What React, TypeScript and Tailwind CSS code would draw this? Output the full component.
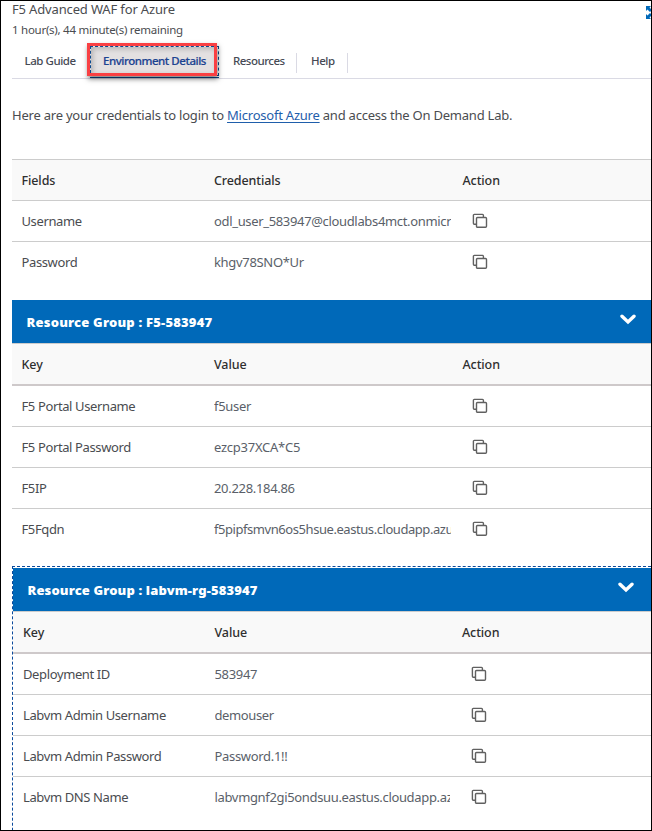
import React from "react";

type Row = { label: string; value: string; valueClass?: string };

const credentials: Row[] = [
  { label: "Username", value: "odl_user_583947@cloudlabs4mct.onmicrosoft.com", valueClass: "tracking-[-0.34px]" },
  { label: "Password", value: "khgv78SNO*Ur" },
];

const f5: Row[] = [
  { label: "F5 Portal Username", value: "f5user" },
  { label: "F5 Portal Password", value: "ezcp37XCA*C5", valueClass: "tracking-[-0.25px]" },
  { label: "F5IP", value: "20.228.184.86" },
  { label: "F5Fqdn", value: "f5pipfsmvn6os5hsue.eastus.cloudapp.azure.com", valueClass: "tracking-[-0.44px]" },
];

const labvm: Row[] = [
  { label: "Deployment ID", value: "583947" },
  { label: "Labvm Admin Username", value: "demouser", valueClass: "tracking-[-0.4px]" },
  { label: "Labvm Admin Password", value: "Password.1!!" },
  { label: "Labvm DNS Name", value: "labvmgnf2gi5ondsuu.eastus.cloudapp.azure.com", valueClass: "tracking-[-0.34px]" },
];

function CopyIcon() {
  return (
    <svg width="16" height="16" viewBox="0 0 16 16" fill="none" stroke="#606060" strokeWidth="1.4">
      <path d="M4.2 11.2H2.3a.9.9 0 0 1-.9-.9V2.3a.9.9 0 0 1 .9-.9h8.2a.9.9 0 0 1 .9.9v1.9" />
      <rect x="4.500" y="4.500" width="10" height="9.8" rx="1" />
    </svg>
  );
}

function Table({ heads, rows, thick, inset }: { heads: string[]; rows: Row[]; thick?: boolean; inset?: boolean }) {
  const cols = inset
    ? "grid grid-cols-[191.5px_247.5px_1fr] pl-[10px]"
    : "grid grid-cols-[192.5px_248.5px_1fr] pl-[9.5px]";
  return (
    <div className="text-[13px] leading-[40px]">
      <div className={`${cols} h-[41px] border-t border-[#ccc] bg-[#f9f9f9] text-[12.5px] leading-[42px] font-medium tracking-[-0.1px] text-[#2f2f2f]`}>
        {heads.map((h) => (
          <div key={h} className="h-[40px]">{h}</div>
        ))}
      </div>
      {rows.map((r, i) => (
        <div
          key={r.label}
          className={`${cols} ${thick && i === 0 ? "h-[42px] border-t-2 border-[#cec9ca]" : "h-[41px] border-t border-[#ccc]"}`}
        >
          <div className="tracking-[-0.38px] whitespace-nowrap text-[#4a4c50]">{r.label}</div>
          <div className={`${inset ? "w-[235.5px]" : "w-[237px]"} overflow-hidden whitespace-nowrap text-[#5a5f69] ${r.valueClass ?? "tracking-[-0.32px]"}`}>
            {r.value}
          </div>
          <div className={`flex items-center ${inset ? "pl-[9px]" : "pl-[9.5px]"}`}>
            <CopyIcon />
          </div>
        </div>
      ))}
    </div>
  );
}

function GroupTitle({ title, inset }: { title: string; inset?: boolean }) {
  return (
    <div className={`flex h-[43px] items-center justify-between bg-[#0069b9] ${inset ? "pr-[17px]" : "pr-[15px]"} pl-[14.5px] text-white`}>
      <span className={`pt-[2px] text-[13px] font-black ${inset ? "tracking-[0.13px]" : "tracking-[0.2px]"}`}>{title}</span>
      <svg className="mb-[5px]" width="16" height="11" viewBox="0 0 16 11" fill="none" stroke="white" strokeWidth="3.4" strokeLinecap="round">
        <path d="M2 2.2L8 8l6-5.8" />
      </svg>
    </div>
  );
}

export default function App() {
  return (
    <div className="flex h-[831px] w-[652px] flex-col overflow-hidden border border-black bg-white pl-[11px] font-['Noto_Sans','Open_Sans',sans-serif] text-[#4a4c50]">
      <header className="flex h-[42px] shrink-0 justify-between">
        <div>
          <div className="h-[19px] text-[13px] leading-[17px] tracking-[-0.15px]">F5 Advanced WAF for Azure</div>
          <div className="text-[11.5px] leading-[20px] tracking-[-0.26px]">1 hour(s), 44 minute(s) remaining</div>
        </div>
        <div className="mt-[5px] h-[13px] w-[5px] overflow-hidden">
          <svg width="13" height="13" viewBox="0 0 13 13" fill="#0069b9">
            <path d="M0 0h5L3.500 1.500 6 4 4 6 1.500 3.500 0 5zM0 13h5l-1.500-1.500L6 9 4 7 1.500 9.500 0 8zM13 0H8l1.500 1.500L7 4l2 2 2.500-2.500L13 5zM13 13H8l1.500-1.500L7 9l2-2 2.500 2.500L13 8z" />
          </svg>
        </div>
      </header>

      <nav className="flex h-[36px] shrink-0 border-b border-[#dadae4] text-[11.5px] font-medium leading-[36px] tracking-[-0.45px] text-[#464a55]">
        <div className="w-[75px] pl-[12.5px]">Lab Guide</div>
        <div className="relative h-[35px] w-[132px]">
          <div className="absolute top-[3px] left-[3px] h-[30px] w-[129px] border border-dashed border-[#0b4a8f]" />
          <div className="absolute top-[34px] left-[3px] h-px w-[129px] bg-[#0b4a8f]" />
          <div className="absolute top-0 left-0 h-[33px] w-[130px] border-[3px] border-[#f94043] bg-[#e3e0e1] shadow-[1px_3px_5px_rgba(0,0,0,0.5)]">
            <div className="h-full w-full border-t border-l border-dashed border-[#0b4a8f] shadow-[inset_2px_2px_5px_rgba(0,0,0,0.2)]" />
          </div>
          <span className="absolute top-0 left-[16px] whitespace-nowrap text-[#1c4391] [-webkit-text-stroke:0.2px_#1c4391]">Environment Details</span>
        </div>
        <div className="mt-[10px] h-[20px] w-[78px] border-r border-[#dadae4] pl-[14px] leading-[16px] tracking-[-0.5px]">Resources</div>
        <div className="mt-[10px] h-[20px] w-[51px] border-r border-[#dadae4] pl-[14px] leading-[16px]">Help</div>
      </nav>

      <p className="h-[80px] shrink-0 pt-[26px] text-[13px] leading-[20px] tracking-[-0.22px] whitespace-nowrap">
        Here are your credentials to login to <a className="text-[#1f5eab] underline underline-offset-2">Microsoft Azure</a> and access the On Demand Lab.
      </p>

      <Table heads={["Fields", "Credentials", "Action"]} rows={credentials} />
      <section className="mt-[18px]">
        <GroupTitle title="Resource Group : F5-583947" />
        <Table heads={["Key", "Value", "Action"]} rows={f5} thick />
      </section>
      <section className="mt-[17px] h-[300px] shrink-0 border-t border-l border-dashed border-[#0b4a9c] pt-px">
        <GroupTitle title="Resource Group : labvm-rg-583947" inset />
        <Table heads={["Key", "Value", "Action"]} rows={labvm} thick inset />
      </section>
    </div>
  );
}
